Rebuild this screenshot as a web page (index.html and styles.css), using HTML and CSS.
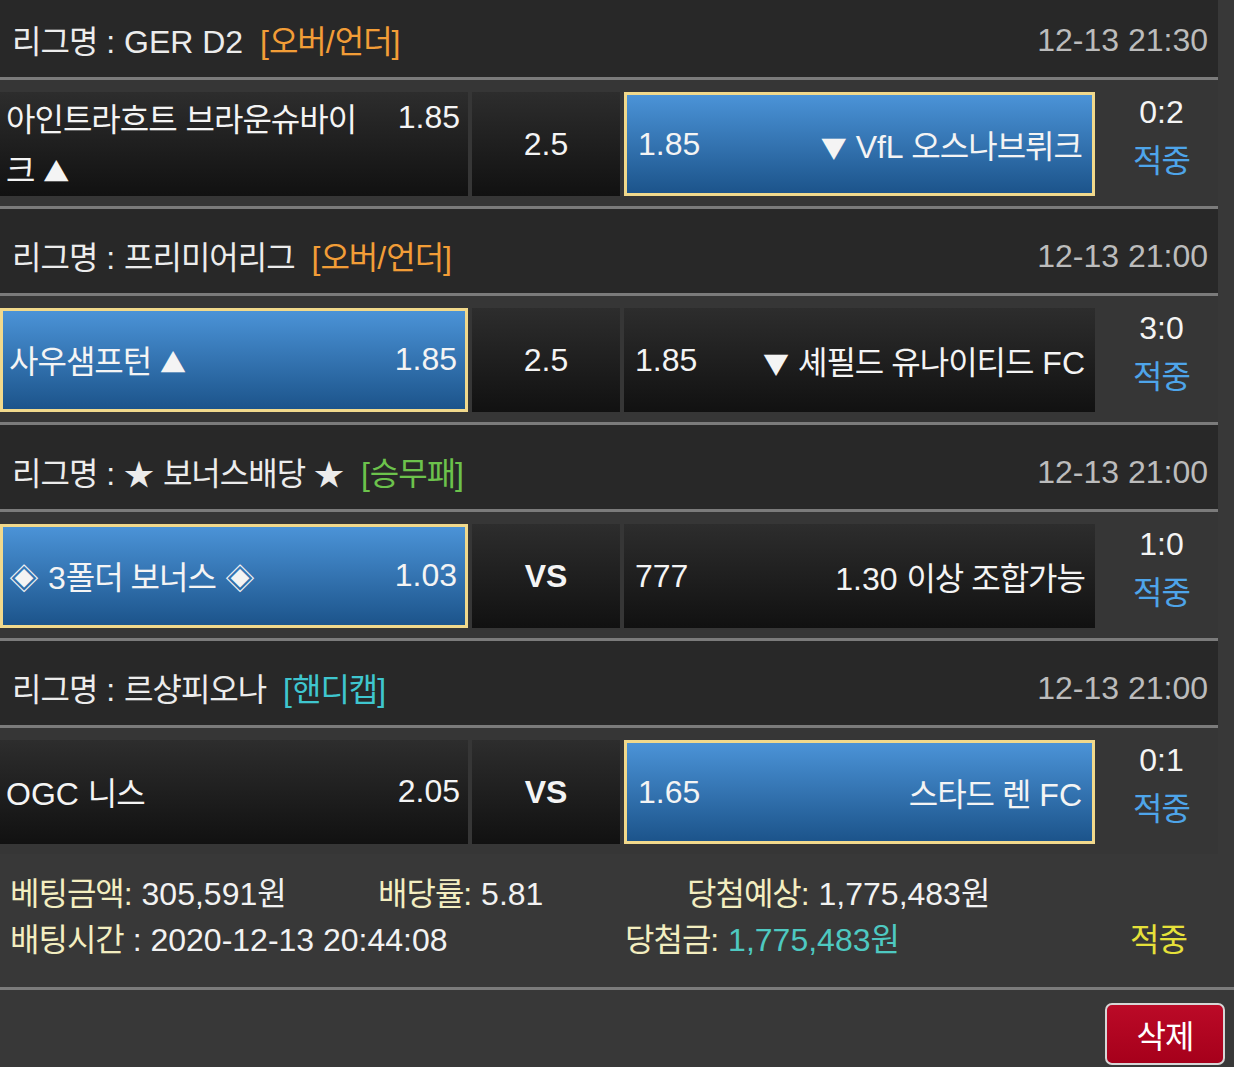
FILE: index.html
```html
<!DOCTYPE html>
<html lang="ko">
<head>
<meta charset="utf-8">
<title>배팅내역</title>
<link rel="stylesheet" href="styles.css">
</head>
<body>
<div class="board">
  <section class="game">
    <div class="league league-first">
      <div class="league-name"><span class="k">리그명</span> : GER D2 <span class="tag tag-ou">[<span class="k">오버</span>/<span class="k">언더</span>]</span></div>
      <div class="time">12-13 21:30</div>
    </div>
    <div class="row">
      <div class="cell home">
        <div class="pick"><span class="name"><span class="k">아인트라흐트</span> <span class="k">브라운슈바이</span><span class="k">크</span> <span class="tri">▲</span></span><span class="odds">1.85</span></div>
      </div>
      <div class="cell mid">2.5</div>
      <div class="cell away sel"><span class="odds">1.85</span><span class="name"><span class="tri">▼</span> VfL <span class="k">오스나브뤼크</span></span></div>
      <div class="score"><div>0:2</div><div class="hit k">적중</div></div>
    </div>
  </section>

  <section class="game">
    <div class="league">
      <div class="league-name"><span class="k">리그명</span> : <span class="k">프리미어리그</span> <span class="tag tag-ou">[<span class="k">오버</span>/<span class="k">언더</span>]</span></div>
      <div class="time">12-13 21:00</div>
    </div>
    <div class="row">
      <div class="cell home sel">
        <div class="pick"><span class="name"><span class="k">사우샘프턴</span> <span class="tri">▲</span></span><span class="odds">1.85</span></div>
      </div>
      <div class="cell mid">2.5</div>
      <div class="cell away"><span class="odds">1.85</span><span class="name"><span class="tri">▼</span> <span class="k">셰필드 유나이티드</span> FC</span></div>
      <div class="score"><div>3:0</div><div class="hit k">적중</div></div>
    </div>
  </section>

  <section class="game">
    <div class="league">
      <div class="league-name"><span class="k">리그명</span> : <span class="sym">★</span> <span class="k">보너스배당</span> <span class="sym">★</span> <span class="tag tag-wdl">[<span class="k">승무패</span>]</span></div>
      <div class="time">12-13 21:00</div>
    </div>
    <div class="row">
      <div class="cell home sel">
        <div class="pick"><span class="name"><span class="sym">◈</span> 3<span class="k">폴더 보너스</span> <span class="sym">◈</span></span><span class="odds">1.03</span></div>
      </div>
      <div class="cell mid vs">VS</div>
      <div class="cell away"><span class="odds">777</span><span class="name">1.30 <span class="k">이상 조합가능</span></span></div>
      <div class="score"><div>1:0</div><div class="hit k">적중</div></div>
    </div>
  </section>

  <section class="game">
    <div class="league">
      <div class="league-name"><span class="k">리그명</span> : <span class="k">르샹피오나</span> <span class="tag tag-hc">[<span class="k">핸디캡</span>]</span></div>
      <div class="time">12-13 21:00</div>
    </div>
    <div class="row">
      <div class="cell home">
        <div class="pick"><span class="name">OGC <span class="k">니스</span></span><span class="odds">2.05</span></div>
      </div>
      <div class="cell mid vs">VS</div>
      <div class="cell away sel"><span class="odds">1.65</span><span class="name"><span class="k">스타드 렌</span> FC</span></div>
      <div class="score"><div>0:1</div><div class="hit k">적중</div></div>
    </div>
  </section>
</div>

<div class="summary">
  <div class="sum-line sum-line-1">
    <div><span class="lbl"><span class="k">베팅금액</span>:</span> 305,591<span class="k">원</span></div>
    <div><span class="lbl"><span class="k">배당률</span>:</span> 5.81</div>
    <div><span class="lbl"><span class="k">당첨예상</span>:</span> 1,775,483<span class="k">원</span></div>
  </div>
  <div class="sum-line sum-line-2">
    <div><span class="lbl"><span class="k">배팅시간</span></span> : 2020-12-13 20:44:08</div>
    <div><span class="lbl"><span class="k">당첨금</span>:</span> <span class="win">1,775,483<span class="k">원</span></span></div>
    <div class="res"><span class="k">적중</span></div>
  </div>
</div>

<div class="actions">
  <button class="btn-del" type="button"><span class="k">삭제</span></button>
</div>
</body>
</html>
```

FILE: styles.css
```css
* {
  box-sizing: border-box;
}

html,
body {
  margin: 0;
  padding: 0;
}

body {
  width: 1234px;
  height: 1067px;
  overflow: hidden;
  background: #383838;
  color: #f2f2f2;
  font-family: "Liberation Sans", "Noto Sans CJK KR", sans-serif;
  font-size: 32px;
}

.k {
  font-family: "Noto Sans CJK KR", sans-serif;
  font-size: 32px;
  letter-spacing: -1px;
}

.sym {
  font-family: "Noto Sans CJK KR", sans-serif;
  font-size: 30px;
}

.tri {
  font-family: "Noto Sans CJK KR", sans-serif;
  font-size: 26px;
}

.board {
  width: 1218px;
}

/* league header */
.league {
  height: 87px;
  padding: 10px 10px 0 12px;
  display: flex;
  align-items: center;
  justify-content: space-between;
  background: #282828;
  border-bottom: 3px solid #7b7b7b;
  line-height: 40px;
  white-space: nowrap;
}

.league-first {
  height: 80px;
  padding-top: 3px;
}

.league-name {
  color: #ececec;
}

.tag {
  margin-left: 8px;
}

.tag-ou {
  color: #f29d37;
}

.tag-wdl {
  color: #6cc24c;
}

.tag-hc {
  color: #3fc6cf;
}

.time {
  color: #bcbcbc;
}

/* match row */
.row {
  height: 129px;
  padding: 12px 0 10px;
  display: flex;
  gap: 4px;
  background: #363636;
  border-bottom: 3px solid #7b7b7b;
}

.game:last-child .row {
  height: 126px;
  border-bottom: none;
}

.cell {
  height: 104px;
  display: flex;
  align-items: center;
  background: linear-gradient(#2d2d2d, #111111);
  color: #f4f4f4;
}

.home {
  width: 468px;
  flex: none;
  padding: 0 8px 0 6px;
}

.mid {
  width: 148px;
  flex: none;
  justify-content: center;
}

.vs {
  font-weight: bold;
}

.away {
  width: 471px;
  flex: none;
  justify-content: space-between;
  padding: 0 10px 0 11px;
  white-space: nowrap;
}

.sel {
  background: linear-gradient(#4b93d7, #1c548b);
  border: 3px solid #f1d98c;
}

.pick {
  width: 100%;
  display: flex;
  align-items: flex-start;
  line-height: 48px;
}

.pick .name {
  flex: 1;
}

.odds {
  flex: none;
}

.home .odds {
  margin-left: 30px;
}

.score {
  flex: 1;
  height: 104px;
  padding: 0 0 19px 6px;
  display: flex;
  flex-direction: column;
  align-items: center;
  justify-content: center;
  line-height: 46px;
  color: #f4f4f4;
}

.hit {
  color: #4ea5ea;
}

/* summary */
.summary {
  padding: 14px 0 27px 10px;
  border-bottom: 3px solid #7b7b7b;
  line-height: 46px;
  white-space: nowrap;
}

.sum-line {
  display: grid;
  height: 46px;
  grid-template-rows: 46px;
}

.sum-line-1 {
  grid-template-columns: 368px 309px auto;
}

.sum-line-2 {
  grid-template-columns: 615px 505px auto;
}

.lbl {
  color: #f3eec0;
}

.win {
  color: #4ec9c1;
}

.res {
  color: #e6e13a;
}

/* actions */
.actions {
  display: flex;
  justify-content: flex-end;
  padding: 13px 9px 0 0;
}

.btn-del {
  width: 120px;
  height: 62px;
  margin: 0;
  padding: 0;
  display: flex;
  align-items: center;
  justify-content: center;
  border: 2px solid #d6d6d6;
  border-radius: 7px;
  background: linear-gradient(#bb0a27, #a6001b);
  color: #ffffff;
  font-family: "Liberation Sans", "Noto Sans CJK KR", sans-serif;
  font-size: 32px;
  line-height: 1;
}
```
